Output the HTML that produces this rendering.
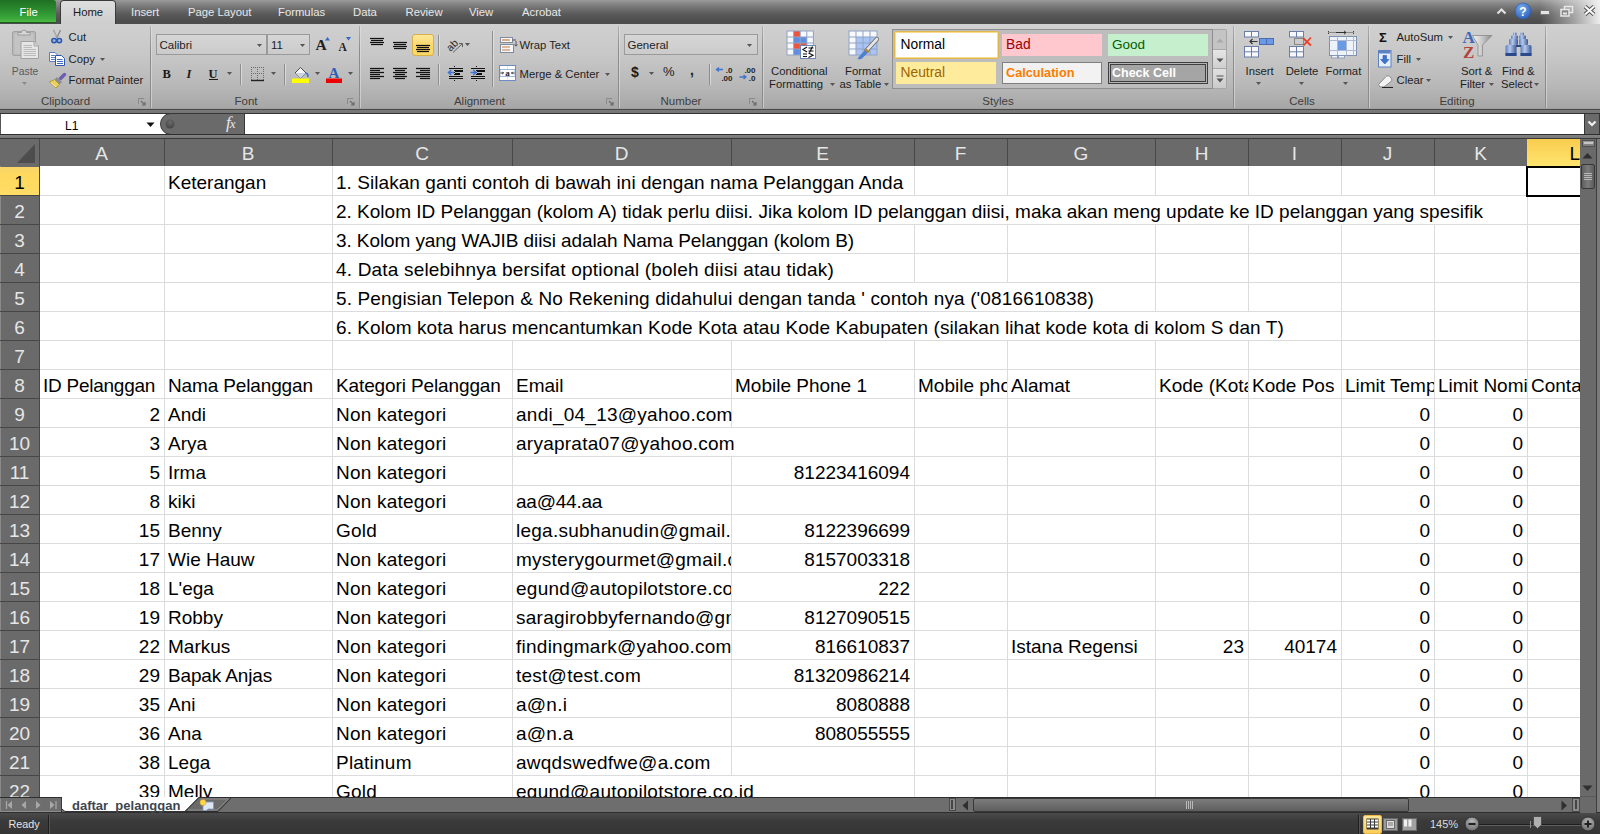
<!DOCTYPE html>
<html><head><meta charset="utf-8"><title>Excel</title>
<style>
html,body{margin:0;padding:0;}
body{width:1600px;height:834px;overflow:hidden;background:#c8c8c8;font-family:"Liberation Sans",sans-serif;}
#root{position:relative;width:1600px;height:834px;overflow:hidden;}
.abs{position:absolute;}
.gridbg{position:absolute;background:#fff;}
.hl{position:absolute;left:40px;width:1540px;height:1px;background:#dadcdd;}
.vl{position:absolute;width:1px;background:#dadcdd;}
.ct{position:absolute;height:29px;line-height:29px;font-size:19px;color:#000;white-space:nowrap;overflow:hidden;padding-top:2px;box-sizing:border-box;}
.ct.r{text-align:right;}
.corner{position:absolute;left:0;top:139px;width:39px;height:27px;background:#6a6a6a;}
.colhdr{position:absolute;left:40px;top:139px;width:1540px;height:27px;background:#6a6a6a;border-bottom:0;}
.ch{position:absolute;top:139px;height:27px;line-height:30px;font-size:19px;color:#e6e6e6;text-align:center;box-sizing:border-box;}
.ch.sel{background:linear-gradient(#f9cd4e,#ffe46f);color:#000;text-align:right;padding-right:0;}
.chsep{position:absolute;top:139px;width:1px;height:27px;background:#484848;}
.rowhdr{position:absolute;left:0;top:166px;width:39px;height:631px;background:#6a6a6a;}
.rh{position:absolute;left:0;width:39px;height:28px;line-height:29px;font-size:19px;color:#e6e6e6;text-align:center;padding-top:1px;box-sizing:border-box;}
.rh.sel{background:linear-gradient(#f7d46a,#ffd95e 30%,#ffdc66);color:#000;}
.rhsep{position:absolute;left:0;width:39px;height:1px;background:#464646;}
.selbox{position:absolute;left:1526px;top:166px;width:60px;height:31px;border:2px solid #000;border-top-width:2px;box-sizing:border-box;}
.t{position:absolute;white-space:nowrap;}
#tabstrip{position:absolute;left:0;top:0;width:1600px;height:24px;background:linear-gradient(#9a9a9a 0px,#7a7a7a 6px,#5a5a5a 14px,#4f4f4f 20px,#4d4d4d 24px);}
#tabglow{position:absolute;left:1480px;top:0;width:120px;height:24px;background:linear-gradient(90deg,rgba(240,240,240,0) 0%,rgba(240,240,240,0) 50%,rgba(240,240,240,0.55) 80%,rgba(245,245,245,0.95) 100%);}
#filebtn{position:absolute;left:0;top:0;width:56px;height:23px;border-radius:0 3px 0 0;background:linear-gradient(#1f6f22 0%,#2a8a2e 40%,#3aa83c 80%,#57c045 100%);box-shadow:inset 0 -1px 0 #1b5e1c;}
#hometab{position:absolute;left:61px;top:1px;width:54px;height:24px;border-radius:3px 3px 0 0;background:linear-gradient(#dedede,#cdcdcd);box-shadow:0 0 0 1px #3a3a3a;}
#ribbon{position:absolute;left:0;top:24px;width:1600px;height:85px;background:linear-gradient(#d0d0d0 0%,#c8c8c8 35%,#b9b9b9 70%,#a6a6a6 100%);}
#ribbonbot{position:absolute;left:0;top:108px;width:1600px;height:1px;background:#a0a0a0;}
.gsep{position:absolute;top:26px;width:1px;height:82px;background:linear-gradient(rgba(140,140,140,0.5),#8c8c8c 30%,#8a8a8a);box-shadow:1px 0 0 rgba(228,228,228,0.55);}
#fbband1{position:absolute;left:0;top:109px;width:1600px;height:5px;background:linear-gradient(#4a4a4a 0px,#4a4a4a 1px,#7a7a7a 1px,#747474 4px,#343434 4px);}
#namebox{position:absolute;left:0;top:114px;width:165px;height:20px;background:#fff;box-shadow:inset 1px 0 0 #555;}
#fxpill{position:absolute;left:160px;top:113px;width:85px;height:22px;box-sizing:border-box;background:#6a6a6a;border:1px solid #383838;border-radius:11px 0 0 11px;}
#fxinput{position:absolute;left:245px;top:114px;width:1340px;height:20px;background:#fff;}
#fbexp{position:absolute;left:1584px;top:113px;width:16px;height:22px;box-sizing:border-box;background:#6a6a6a;border:1px solid #363636;}
#fbband2{position:absolute;left:0;top:134px;width:1600px;height:5px;background:linear-gradient(#2e2e2e 0px,#2e2e2e 1px,#858585 1px,#767676 4px,#3a3a3a 4px);}
.combo{position:absolute;box-sizing:border-box;border:1px solid #9a9a9a;background:linear-gradient(#d6d6d6,#cbcbcb);}
.rowhdr{box-shadow:inset 1px 0 0 #8a8a8a;}

</style></head><body>
<div id="root">
<div id="tabstrip"></div>
<div id="tabglow"></div>
<div id="filebtn"></div>
<div class="t" style="left:19.5px;top:6.93px;font-size:11.3px;line-height:11.3px;color:#ffffff;font-weight:normal;">File</div>
<div id="hometab"></div>
<div class="t" style="left:73px;top:6.93px;font-size:11.3px;line-height:11.3px;color:#1a1a1a;font-weight:normal;">Home</div>
<div class="t" style="left:131px;top:6.93px;font-size:11.3px;line-height:11.3px;color:#e8e8e8;font-weight:normal;">Insert</div>
<div class="t" style="left:188px;top:6.93px;font-size:11.3px;line-height:11.3px;color:#e8e8e8;font-weight:normal;">Page Layout</div>
<div class="t" style="left:278px;top:6.93px;font-size:11.3px;line-height:11.3px;color:#e8e8e8;font-weight:normal;">Formulas</div>
<div class="t" style="left:353px;top:6.93px;font-size:11.3px;line-height:11.3px;color:#e8e8e8;font-weight:normal;">Data</div>
<div class="t" style="left:405.5px;top:6.93px;font-size:11.3px;line-height:11.3px;color:#e8e8e8;font-weight:normal;">Review</div>
<div class="t" style="left:469px;top:6.93px;font-size:11.3px;line-height:11.3px;color:#e8e8e8;font-weight:normal;">View</div>
<div class="t" style="left:522px;top:6.93px;font-size:11.3px;line-height:11.3px;color:#e8e8e8;font-weight:normal;">Acrobat</div>
<svg class="abs" style="left:1496px;top:7px" width="11" height="8" viewBox="0 0 11 8"><path d="M1.5,6.5 L5.5,2.5 L9.5,6.5" fill="none" stroke="#e0e0e0" stroke-width="2.2"/></svg>
<svg class="abs" style="left:1514px;top:2px" width="18" height="18" viewBox="0 0 18 18"><defs><radialGradient id="hg" cx="40%" cy="30%" r="70%"><stop offset="0" stop-color="#7aa7e8"/><stop offset="1" stop-color="#2f66c0"/></radialGradient></defs><circle cx="9" cy="9" r="8" fill="url(#hg)" stroke="#2a5aa8" stroke-width="0.6"/><text x="9" y="13.5" font-family="Liberation Sans" font-weight="bold" font-size="12" fill="#fff" text-anchor="middle">?</text></svg>
<div class="abs" style="left:1540px;top:10px;width:10px;height:5px;background:#e6e6e6;border:1px solid #7a7a7a;border-radius:1px;box-sizing:border-box"></div>
<svg class="abs" style="left:1560px;top:5px" width="14" height="12" viewBox="0 0 14 12"><rect x="4.5" y="1.5" width="8" height="6" fill="none" stroke="#e8e8e8" stroke-width="1.5"/><rect x="1" y="4.5" width="8" height="6.5" fill="#888" stroke="#e8e8e8" stroke-width="1.5"/><rect x="3" y="7.5" width="4" height="2" fill="#e8e8e8"/></svg>
<svg class="abs" style="left:1583px;top:5px" width="13" height="11" viewBox="0 0 13 11"><path d="M2,1.5 L11,9.5 M11,1.5 L2,9.5" stroke="#4a4a4a" stroke-width="4"/><path d="M2,1.5 L11,9.5 M11,1.5 L2,9.5" stroke="#f8f8f8" stroke-width="2.3"/></svg>
<div id="ribbon"></div>
<div id="ribbonbot"></div>
<div class="gsep" style="left:150px"></div>
<div class="gsep" style="left:359px"></div>
<div class="gsep" style="left:618px"></div>
<div class="gsep" style="left:762px"></div>
<div class="gsep" style="left:1233px"></div>
<div class="gsep" style="left:1368px"></div>
<div class="gsep" style="left:1545px"></div>
<div class="t" style="left:25.5px;width:80px;text-align:center;top:96.17px;font-size:11.5px;line-height:11.5px;color:#3e3e3e;font-weight:normal;">Clipboard</div>
<div class="t" style="left:216.0px;width:60px;text-align:center;top:96.17px;font-size:11.5px;line-height:11.5px;color:#3e3e3e;font-weight:normal;">Font</div>
<div class="t" style="left:439.5px;width:80px;text-align:center;top:96.17px;font-size:11.5px;line-height:11.5px;color:#3e3e3e;font-weight:normal;">Alignment</div>
<div class="t" style="left:646.0px;width:70px;text-align:center;top:96.17px;font-size:11.5px;line-height:11.5px;color:#3e3e3e;font-weight:normal;">Number</div>
<div class="t" style="left:968.0px;width:60px;text-align:center;top:96.17px;font-size:11.5px;line-height:11.5px;color:#3e3e3e;font-weight:normal;">Styles</div>
<div class="t" style="left:1272.0px;width:60px;text-align:center;top:96.17px;font-size:11.5px;line-height:11.5px;color:#3e3e3e;font-weight:normal;">Cells</div>
<div class="t" style="left:1422.0px;width:70px;text-align:center;top:96.17px;font-size:11.5px;line-height:11.5px;color:#3e3e3e;font-weight:normal;">Editing</div>
<svg class="abs" style="left:138px;top:98px" width="8" height="8" viewBox="0 0 8 8"><path d="M0.5,6 V0.5 H6" fill="none" stroke="#8a8a8a" stroke-width="1"/><path d="M3,3 L7,7 M7,4 V7 H4" fill="none" stroke="#6d6d6d" stroke-width="1.2"/></svg>
<svg class="abs" style="left:347px;top:98px" width="8" height="8" viewBox="0 0 8 8"><path d="M0.5,6 V0.5 H6" fill="none" stroke="#8a8a8a" stroke-width="1"/><path d="M3,3 L7,7 M7,4 V7 H4" fill="none" stroke="#6d6d6d" stroke-width="1.2"/></svg>
<svg class="abs" style="left:606px;top:98px" width="8" height="8" viewBox="0 0 8 8"><path d="M0.5,6 V0.5 H6" fill="none" stroke="#8a8a8a" stroke-width="1"/><path d="M3,3 L7,7 M7,4 V7 H4" fill="none" stroke="#6d6d6d" stroke-width="1.2"/></svg>
<svg class="abs" style="left:749px;top:98px" width="8" height="8" viewBox="0 0 8 8"><path d="M0.5,6 V0.5 H6" fill="none" stroke="#8a8a8a" stroke-width="1"/><path d="M3,3 L7,7 M7,4 V7 H4" fill="none" stroke="#6d6d6d" stroke-width="1.2"/></svg>
<svg class="abs" style="left:10px;top:28px" width="30" height="32" viewBox="0 0 30 32">
      <rect x="2.5" y="3.5" width="23" height="24" rx="1.5" fill="#b9b9b9" stroke="#a2a2a2"/>
      <rect x="4.5" y="5.5" width="19" height="20" fill="#c4c4c4"/>
      <path d="M8,7 V4.5 H11.5 A2.5,2.5 0 0 1 16.5,4.5 H20 V7 Z" fill="#d8d8d8" stroke="#9a9a9a"/>
      <path d="M11,13.5 H24 L28.5,18 V30.5 H11 Z" fill="#e6e6e6" stroke="#a0a0a0"/>
      <path d="M24,13.5 V18 H28.5" fill="#d0d0d0" stroke="#a8a8a8"/>
      <path d="M13.5,17.5 H22 M13.5,19.5 H22 M13.5,21.5 H26 M13.5,23.5 H26 M13.5,25.5 H26 M13.5,27.5 H26" stroke="#b4b4b4" stroke-width="0.9"/>
    </svg>
<div class="t" style="left:11.8px;top:66.60px;font-size:10.4px;line-height:10.4px;color:#5a5a62;font-weight:normal;">Paste</div>
<svg class="abs" style="left:22px;top:82px" width="6" height="4" viewBox="0 0 6 4"><polygon points="0,0 5,0 2.5,3" fill="#8a8a8a"/></svg>
<svg class="abs" style="left:50px;top:29px" width="14" height="16" viewBox="0 0 14 16">
      <path d="M3.5,1 L7.2,9 M10.5,1 L6.8,9" stroke="#8c8c8c" stroke-width="1.4"/>
      <path d="M3.8,1.5 L6.5,7.5" stroke="#dcdcdc" stroke-width="0.5"/>
      <ellipse cx="4.1" cy="11.6" rx="2.3" ry="2.1" fill="#9fb6e2" stroke="#2a58b0" stroke-width="1.5"/>
      <ellipse cx="9.3" cy="11.6" rx="2.3" ry="2.1" fill="#9fb6e2" stroke="#2a58b0" stroke-width="1.5"/>
    </svg>
<div class="t" style="left:68.5px;top:31.83px;font-size:11.3px;line-height:11.3px;color:#1e1e1e;font-weight:normal;">Cut</div>
<svg class="abs" style="left:48px;top:51px" width="18" height="16" viewBox="0 0 18 16">
      <path d="M1.5,1.5 H7 L9.5,4 V10.5 H1.5 Z" fill="#fbfcff" stroke="#5b7fc0"/>
      <path d="M3,4.5 H7 M3,6.5 H8 M3,8.5 H8" stroke="#5b7fc0" stroke-width="1"/>
      <path d="M7.5,4.5 H13.5 L16.5,7.5 V14.5 H7.5 Z" fill="#fbfcff" stroke="#2c57a6"/>
      <path d="M9,8.5 H14.5 M9,10.5 H15 M9,12.5 H15" stroke="#3e6bbd" stroke-width="1"/>
    </svg>
<div class="t" style="left:68.5px;top:53.63px;font-size:11.3px;line-height:11.3px;color:#1e1e1e;font-weight:normal;">Copy</div>
<svg class="abs" style="left:99.5px;top:58px" width="6" height="4" viewBox="0 0 6 4"><polygon points="0,0 5,0 2.5,3" fill="#555"/></svg>
<svg class="abs" style="left:48px;top:72px" width="19" height="17" viewBox="0 0 19 17">
      <path d="M12.5,6.5 L16.5,2.5" stroke="#6a5fb0" stroke-width="3.4" stroke-linecap="round"/>
      <path d="M9,5 L14,10 L11.5,12.5 L6.5,7.5 Z" fill="#8c8c9a"/>
      <path d="M1.5,10 L6.5,7.5 L11.5,12.5 L8,16 Z" fill="#e6cf5e" stroke="#a98f2a" stroke-width="0.8"/>
      <path d="M3,10.5 L8,15" stroke="#fff3a8" stroke-width="1"/>
    </svg>
<div class="t" style="left:68.5px;top:75.43px;font-size:11.3px;line-height:11.3px;color:#1e1e1e;font-weight:normal;">Format Painter</div>
<div class="combo" style="left:156px;top:34px;width:111px;height:21px"></div>
<div class="combo" style="left:267px;top:34px;width:43px;height:21px"></div>
<div class="t" style="left:159.5px;top:40.27px;font-size:11.5px;line-height:11.5px;color:#1e1e1e;font-weight:normal;">Calibri</div>
<svg class="abs" style="left:257px;top:44px" width="6" height="4" viewBox="0 0 6 4"><polygon points="0,0 5,0 2.5,3" fill="#555"/></svg>
<div class="t" style="left:271px;top:40.27px;font-size:11.5px;line-height:11.5px;color:#1e1e1e;font-weight:normal;">11</div>
<svg class="abs" style="left:300px;top:44px" width="6" height="4" viewBox="0 0 6 4"><polygon points="0,0 5,0 2.5,3" fill="#555"/></svg>
<div class="t" style="left:315.5px;top:37px;font-family:'Liberation Serif',serif;font-size:15.5px;line-height:16px;color:#222;font-weight:bold">A</div>
<svg class="abs" style="left:325px;top:37px" width="6" height="4" viewBox="0 0 6 4"><polygon points="0,3.5 5,3.5 2.5,0" fill="#3268c4"/></svg>
<div class="t" style="left:338.5px;top:41px;font-family:'Liberation Serif',serif;font-size:11.5px;line-height:12px;color:#222;font-weight:bold">A</div>
<svg class="abs" style="left:346px;top:37px" width="6" height="4" viewBox="0 0 6 4"><polygon points="0,0 5,0 2.5,3.5" fill="#3268c4"/></svg>
<div class="t" style="left:162.5px;top:66.5px;font-family:'Liberation Serif',serif;font-size:12.5px;line-height:14px;color:#1a1a1a;font-weight:bold">B</div>
<div class="t" style="left:186.5px;top:66.5px;font-family:'Liberation Serif',serif;font-size:12.5px;line-height:14px;color:#1a1a1a;font-style:italic;font-weight:bold">I</div>
<div class="t" style="left:208.5px;top:66.5px;font-family:'Liberation Serif',serif;font-size:12.5px;line-height:14px;color:#1a1a1a;font-weight:bold">U</div>
<div class="abs" style="left:209px;top:79px;width:9px;height:1.3px;background:#1a1a1a"></div>
<svg class="abs" style="left:227px;top:72px" width="6" height="4" viewBox="0 0 6 4"><polygon points="0,0 5,0 2.5,3" fill="#555"/></svg>
<div class="abs" style="left:240px;top:64px;width:1px;height:21px;background:#8e8e8e;box-shadow:1px 0 0 rgba(236,236,236,0.6)"></div>
<svg class="abs" style="left:250px;top:66px" width="16" height="16" viewBox="0 0 16 16"><path d="M1.5,1 V14 M7.5,1 V14 M13.5,1 V14 M1,1.5 H14 M1,7.5 H14" fill="none" stroke="#6a6a6a" stroke-width="1" stroke-dasharray="1,1"/><path d="M1,14.5 H14" stroke="#222" stroke-width="1.4"/></svg>
<svg class="abs" style="left:271px;top:72px" width="6" height="4" viewBox="0 0 6 4"><polygon points="0,0 5,0 2.5,3" fill="#555"/></svg>
<div class="abs" style="left:284px;top:64px;width:1px;height:21px;background:#8e8e8e;box-shadow:1px 0 0 rgba(236,236,236,0.6)"></div>
<svg class="abs" style="left:291px;top:65px" width="20" height="19" viewBox="0 0 20 19">
      <path d="M4,8 L9.5,2.5 L15,8 L9.5,13.5 Z" fill="#f4f4f4" stroke="#4a4a4a" stroke-width="1"/>
      <path d="M4,8 L15,8 L9.5,13.5 Z" fill="#c9d3e2"/>
      <path d="M15,8 C17,9 17.5,11 16.5,12" fill="none" stroke="#3d6fc6" stroke-width="1.6"/>
      <rect x="1" y="13.5" width="17" height="4.5" fill="#ffff00"/>
    </svg>
<svg class="abs" style="left:315px;top:72px" width="6" height="4" viewBox="0 0 6 4"><polygon points="0,0 5,0 2.5,3" fill="#555"/></svg>
<svg class="abs" style="left:325px;top:65px" width="20" height="19" viewBox="0 0 20 19">
      <text x="9" y="12.5" font-family="Liberation Serif" font-weight="bold" font-size="15" fill="#2e5fb6" text-anchor="middle">A</text>
      <rect x="1" y="13.5" width="16" height="4.5" fill="#ee0000"/>
    </svg>
<svg class="abs" style="left:348px;top:72px" width="6" height="4" viewBox="0 0 6 4"><polygon points="0,0 5,0 2.5,3" fill="#555"/></svg>
<div class="abs" style="left:412px;top:34px;width:22px;height:22px;box-sizing:border-box;border:1px solid #d8b04a;border-radius:3px;background:linear-gradient(#fde89a,#fcd664 60%,#fbd865)"></div>
<svg class="abs" style="left:0;top:0" width="500" height="100"><path d="M370,38.5 H384" stroke="#111" stroke-width="1.25"/><path d="M371,40.5 H383" stroke="#111" stroke-width="1.25"/><path d="M370,42.5 H384" stroke="#111" stroke-width="1.25"/><path d="M371,44.5 H383" stroke="#111" stroke-width="1.25"/><path d="M393,42.5 H407" stroke="#111" stroke-width="1.25"/><path d="M394,44.5 H406" stroke="#111" stroke-width="1.25"/><path d="M393,46.5 H407" stroke="#111" stroke-width="1.25"/><path d="M394,48.5 H406" stroke="#111" stroke-width="1.25"/><path d="M416,45.5 H430" stroke="#111" stroke-width="1.25"/><path d="M417,47.5 H429" stroke="#111" stroke-width="1.25"/><path d="M416,49.5 H430" stroke="#111" stroke-width="1.25"/><path d="M417,51.5 H429" stroke="#111" stroke-width="1.25"/><path d="M370,68.5 H384" stroke="#111" stroke-width="1.25"/><path d="M370,70.5 H380" stroke="#111" stroke-width="1.25"/><path d="M370,72.5 H384" stroke="#111" stroke-width="1.25"/><path d="M370,74.5 H380" stroke="#111" stroke-width="1.25"/><path d="M370,76.5 H384" stroke="#111" stroke-width="1.25"/><path d="M370,78.5 H380" stroke="#111" stroke-width="1.25"/><path d="M393,68.5 H407" stroke="#111" stroke-width="1.25"/><path d="M395,70.5 H405" stroke="#111" stroke-width="1.25"/><path d="M393,72.5 H407" stroke="#111" stroke-width="1.25"/><path d="M395,74.5 H405" stroke="#111" stroke-width="1.25"/><path d="M393,76.5 H407" stroke="#111" stroke-width="1.25"/><path d="M395,78.5 H405" stroke="#111" stroke-width="1.25"/><path d="M416,68.5 H430" stroke="#111" stroke-width="1.25"/><path d="M420,70.5 H430" stroke="#111" stroke-width="1.25"/><path d="M416,72.5 H430" stroke="#111" stroke-width="1.25"/><path d="M420,74.5 H430" stroke="#111" stroke-width="1.25"/><path d="M416,76.5 H430" stroke="#111" stroke-width="1.25"/><path d="M420,78.5 H430" stroke="#111" stroke-width="1.25"/><path d="M454.5,66 V81.5" stroke="#111" stroke-width="1" stroke-dasharray="1,1"/><path d="M449,68.5 H463 M449,76.5 H463 M449,78.5 H463" stroke="#111" stroke-width="1.2"/><path d="M455,71 H463 M455,74 H460" stroke="#111" stroke-width="2"/><path d="M454,72.5 H448.5 M451.2,70 L448.5,72.5 L451.2,75" fill="none" stroke="#3f74d0" stroke-width="1.5"/><path d="M476.5,66 V81.5" stroke="#111" stroke-width="1" stroke-dasharray="1,1"/><path d="M471,68.5 H485 M471,76.5 H485 M471,78.5 H485" stroke="#111" stroke-width="1.2"/><path d="M477,71 H485 M477,74 H482" stroke="#111" stroke-width="2"/><path d="M470.5,72.5 H476 M473.3,70 L476,72.5 L473.3,75" fill="none" stroke="#3f74d0" stroke-width="1.5"/></svg>
<div class="abs" style="left:438px;top:35px;width:1px;height:21px;background:#8e8e8e;box-shadow:1px 0 0 rgba(236,236,236,0.6)"></div>
<div class="abs" style="left:438px;top:64px;width:1px;height:21px;background:#8e8e8e;box-shadow:1px 0 0 rgba(236,236,236,0.6)"></div>
<svg class="abs" style="left:446px;top:37px" width="20" height="17" viewBox="0 0 20 17"><text x="0" y="0" transform="translate(4.5,15) rotate(-45)" font-family="Liberation Sans" font-size="10.5" fill="#2a2a2a">ab</text><path d="M7,15.5 L16,7 M13,6.5 H16.5 V10" fill="none" stroke="#555" stroke-width="0.9"/></svg>
<svg class="abs" style="left:465px;top:43px" width="6" height="4" viewBox="0 0 6 4"><polygon points="0,0 5,0 2.5,3" fill="#555"/></svg>
<div class="abs" style="left:492px;top:31px;width:1px;height:56px;background:#8e8e8e;box-shadow:1px 0 0 rgba(236,236,236,0.6)"></div>
<svg class="abs" style="left:499px;top:36px" width="19" height="18" viewBox="0 0 19 18">
      <rect x="1.5" y="1.5" width="12" height="5" fill="#f7f7f7" stroke="#7f8a9a"/>
      <path d="M3,4 H11" stroke="#c77a3e" stroke-width="1.2"/>
      <path d="M13.5,4 H17" stroke="#555" stroke-width="1"/>
      <rect x="1.5" y="8.5" width="13" height="8" fill="#f4f6fa" stroke="#7f8a9a"/>
      <path d="M3,11 H11 M3,14 H11" stroke="#c77a3e" stroke-width="1.2"/>
      <path d="M17,5 V10 M15.5,8.5 L17,10.2 L18.5,8.5" fill="none" stroke="#4a4a4a" stroke-width="0.9"/>
    </svg>
<div class="t" style="left:519.5px;top:40.43px;font-size:11.3px;line-height:11.3px;color:#1e1e1e;font-weight:normal;">Wrap Text</div>
<svg class="abs" style="left:499px;top:65px" width="18" height="17" viewBox="0 0 18 17">
      <rect x="0.5" y="0.5" width="16" height="15" fill="#dce6f6" stroke="#6c8cc4"/>
      <rect x="1" y="1" width="7" height="3" fill="#fff"/><rect x="9" y="1" width="7" height="3" fill="#fff"/>
      <rect x="1" y="12" width="7" height="3" fill="#fff"/><rect x="9" y="12" width="7" height="3" fill="#fff"/>
      <rect x="1" y="4.5" width="15" height="7" fill="#fff" stroke="#6c8cc4" stroke-width="0.6"/>
      <text x="8.5" y="10.8" font-family="Liberation Serif" font-weight="bold" font-size="9" fill="#222" text-anchor="middle">a</text>
      <path d="M1.5,8 H4.5 M3.3,6.8 L4.5,8 L3.3,9.2 M15.5,8 H12.5 M13.7,6.8 L12.5,8 L13.7,9.2" fill="none" stroke="#222" stroke-width="0.9"/>
    </svg>
<div class="t" style="left:519.5px;top:69.43px;font-size:11.3px;line-height:11.3px;color:#1e1e1e;font-weight:normal;">Merge &amp; Center</div>
<svg class="abs" style="left:605px;top:73px" width="6" height="4" viewBox="0 0 6 4"><polygon points="0,0 5,0 2.5,3" fill="#555"/></svg>
<div class="combo" style="left:624px;top:34px;width:134px;height:21px"></div>
<div class="t" style="left:627.5px;top:40.27px;font-size:11.5px;line-height:11.5px;color:#1e1e1e;font-weight:normal;">General</div>
<svg class="abs" style="left:747px;top:44px" width="6" height="4" viewBox="0 0 6 4"><polygon points="0,0 5,0 2.5,3" fill="#555"/></svg>
<div class="t" style="left:631px;top:64px;font-size:14px;line-height:16px;color:#1a1a1a;font-weight:bold">$</div>
<svg class="abs" style="left:649px;top:72px" width="6" height="4" viewBox="0 0 6 4"><polygon points="0,0 5,0 2.5,3" fill="#555"/></svg>
<div class="t" style="left:663px;top:64px;font-size:13px;line-height:16px;color:#1a1a1a">%</div>
<div class="t" style="left:690px;top:62px;font-size:14px;line-height:16px;color:#1a1a1a;font-weight:bold">,</div>
<div class="abs" style="left:709px;top:64px;width:1px;height:21px;background:#8e8e8e;box-shadow:1px 0 0 rgba(236,236,236,0.6)"></div>
<svg class="abs" style="left:715px;top:66px" width="18" height="15" viewBox="0 0 18 15">
      <text x="17.5" y="7" font-family="Liberation Sans" font-size="8" font-weight="bold" fill="#222" text-anchor="end">.0</text>
      <text x="17.5" y="14.5" font-family="Liberation Sans" font-size="8" font-weight="bold" fill="#222" text-anchor="end">.00</text>
      <path d="M8,3.5 H1.5 M4,1.5 L1.5,3.5 L4,5.5" fill="none" stroke="#3f74d0" stroke-width="1.4"/>
    </svg>
<svg class="abs" style="left:738px;top:66px" width="18" height="15" viewBox="0 0 18 15">
      <text x="17.5" y="7" font-family="Liberation Sans" font-size="8" font-weight="bold" fill="#222" text-anchor="end">.00</text>
      <text x="17.5" y="14.5" font-family="Liberation Sans" font-size="8" font-weight="bold" fill="#222" text-anchor="end">.0</text>
      <path d="M1.5,11 H8 M5.5,9 L8,11 L5.5,13" fill="none" stroke="#3f74d0" stroke-width="1.4"/>
    </svg>
<svg class="abs" style="left:786px;top:30px" width="31" height="30" viewBox="0 0 31 30"><rect x="0.5" y="0.5" width="27.4" height="25" fill="#8fa3c6"/><rect x="1.5" y="1.5" width="5.6" height="5" fill="#f8f9fc"/><rect x="8.1" y="1.5" width="5.6" height="5" fill="#f0533a"/><rect x="14.7" y="1.5" width="5.6" height="5" fill="#f8f9fc"/><rect x="21.299999999999997" y="1.5" width="5.6" height="5" fill="#f8f9fc"/><rect x="1.5" y="7.5" width="5.6" height="5" fill="#f8f9fc"/><rect x="8.1" y="7.5" width="5.6" height="5" fill="#5f8de0"/><rect x="14.7" y="7.5" width="5.6" height="5" fill="#5f8de0"/><rect x="21.299999999999997" y="7.5" width="5.6" height="5" fill="#f8f9fc"/><rect x="1.5" y="13.5" width="5.6" height="5" fill="#f8f9fc"/><rect x="8.1" y="13.5" width="5.6" height="5" fill="#f0533a"/><rect x="14.7" y="13.5" width="5.6" height="5" fill="#f0533a"/><rect x="21.299999999999997" y="13.5" width="5.6" height="5" fill="#f8f9fc"/><rect x="1.5" y="19.5" width="5.6" height="5" fill="#f8f9fc"/><rect x="8.1" y="19.5" width="5.6" height="5" fill="#5f8de0"/><rect x="14.7" y="19.5" width="5.6" height="5" fill="#f8f9fc"/><rect x="21.299999999999997" y="19.5" width="5.6" height="5" fill="#f8f9fc"/><rect x="14.5" y="15.5" width="15" height="13" fill="#fbfcff" stroke="#6f86b0"/><path d="M21,17 L17,19.5 L21,22 M22.5,18 H27.5 M22.5,21 H27.5 M26.5,16.5 L23.5,22.5 M17,24 H21 M17,26.5 H21 M22.5,23 L27,25.3 L22.5,27.5" fill="none" stroke="#111" stroke-width="1.2"/></svg>
<div class="t" style="left:771px;top:65.93px;font-size:11.3px;line-height:11.3px;color:#1e1e1e;font-weight:normal;">Conditional</div>
<div class="t" style="left:769px;top:78.93px;font-size:11.3px;line-height:11.3px;color:#1e1e1e;font-weight:normal;">Formatting</div>
<svg class="abs" style="left:830px;top:83px" width="6" height="4" viewBox="0 0 6 4"><polygon points="0,0 5,0 2.5,3" fill="#555"/></svg>
<svg class="abs" style="left:848px;top:30px" width="31" height="31" viewBox="0 0 31 31"><rect x="0.5" y="0.5" width="29" height="25" fill="#8fa3c6"/><rect x="1.5" y="1.5" width="6" height="5" fill="#f8f9fc"/><rect x="8.5" y="1.5" width="6" height="5" fill="#f8f9fc"/><rect x="15.5" y="1.5" width="6" height="5" fill="#f8f9fc"/><rect x="22.5" y="1.5" width="6" height="5" fill="#f8f9fc"/><rect x="1.5" y="7.5" width="6" height="5" fill="#f8f9fc"/><rect x="8.5" y="7.5" width="6" height="5" fill="#a9c4f2"/><rect x="15.5" y="7.5" width="6" height="5" fill="#a9c4f2"/><rect x="22.5" y="7.5" width="6" height="5" fill="#a9c4f2"/><rect x="1.5" y="13.5" width="6" height="5" fill="#f8f9fc"/><rect x="8.5" y="13.5" width="6" height="5" fill="#a9c4f2"/><rect x="15.5" y="13.5" width="6" height="5" fill="#a9c4f2"/><rect x="22.5" y="13.5" width="6" height="5" fill="#a9c4f2"/><rect x="1.5" y="19.5" width="6" height="5" fill="#f8f9fc"/><rect x="8.5" y="19.5" width="6" height="5" fill="#a9c4f2"/><rect x="15.5" y="19.5" width="6" height="5" fill="#a9c4f2"/><rect x="22.5" y="19.5" width="6" height="5" fill="#a9c4f2"/><path d="M29,9 L18.5,20.5" stroke="#6e6e6e" stroke-width="4.4" stroke-linecap="round"/><path d="M29,9 L18.5,20.5" stroke="#e6e6e6" stroke-width="2.6" stroke-linecap="round"/><path d="M18.5,19 L21,21.5 L14,28.5 C12,29.5 10.5,29.5 9.5,29 C11,26.5 13,24 18.5,19 Z" fill="#4f7fd0"/><path d="M17,20.5 L20,23.5 L21.5,21.5 L18.5,18.5 Z" fill="#b08a3a"/></svg>
<div class="t" style="left:845px;top:65.93px;font-size:11.3px;line-height:11.3px;color:#1e1e1e;font-weight:normal;">Format</div>
<div class="t" style="left:839.5px;top:78.93px;font-size:11.3px;line-height:11.3px;color:#1e1e1e;font-weight:normal;">as Table</div>
<svg class="abs" style="left:884px;top:83px" width="6" height="4" viewBox="0 0 6 4"><polygon points="0,0 5,0 2.5,3" fill="#555"/></svg>
<div class="abs" style="left:892px;top:29px;width:321px;height:60px;box-sizing:border-box;border:1px solid #8e8e8e;background:#bdbdbd"></div>
<div class="abs" style="left:894px;top:31px;width:105px;height:28px;box-sizing:border-box;border:1px solid #e0b84e;border-radius:2px;background:#fff;box-shadow:inset 0 0 0 1px #f8dc8c"></div>
<div class="t" style="left:900.5px;top:38.02px;font-size:13.8px;line-height:13.8px;color:#000;font-weight:normal;">Normal</div>
<div class="abs" style="left:1002px;top:34px;width:100px;height:22px;background:#ffc7ce"></div>
<div class="t" style="left:1006px;top:38.02px;font-size:13.8px;line-height:13.8px;color:#9c0006;font-weight:normal;">Bad</div>
<div class="abs" style="left:1108px;top:34px;width:100px;height:22px;background:#c6efce"></div>
<div class="t" style="left:1112px;top:38.27px;font-size:13.5px;line-height:13.5px;color:#006100;font-weight:normal;">Good</div>
<div class="abs" style="left:896px;top:62px;width:100px;height:22px;background:#ffeb9c"></div>
<div class="t" style="left:900.5px;top:66.02px;font-size:13.8px;line-height:13.8px;color:#9c6500;font-weight:normal;">Neutral</div>
<div class="abs" style="left:1002px;top:62px;width:100px;height:22px;box-sizing:border-box;border:1px solid #7f7f7f;background:#f2f2f2"></div>
<div class="t" style="left:1006px;top:66.95px;font-size:12.7px;line-height:12.7px;color:#fa7d00;font-weight:bold;">Calculation</div>
<div class="abs" style="left:1108px;top:62px;width:100px;height:22px;box-sizing:border-box;border:1px solid #3f3f3f;background:#a5a5a5;box-shadow:inset 0 0 0 1px #b4b4b4,inset 0 0 0 2px #3f3f3f"></div>
<div class="t" style="left:1112px;top:67.12px;font-size:12.5px;line-height:12.5px;color:#ffffff;font-weight:bold;">Check Cell</div>
<div class="abs" style="left:1213px;top:29px;width:14px;height:60px;box-sizing:border-box;border:1px solid #a6a6a6;border-left:0;border-radius:0 2px 2px 0;background:#c4c4c4"></div>
<div class="abs" style="left:1213px;top:49px;width:13px;height:20px;box-sizing:border-box;border-top:1px solid #a8a8a8;border-bottom:1px solid #a8a8a8;background:linear-gradient(#e6e6e6,#cfcfcf)"></div>
<div class="abs" style="left:1213px;top:69px;width:13px;height:19px;background:linear-gradient(#e0e0e0,#cbcbcb)"></div>
<svg class="abs" style="left:1216px;top:38px" width="8" height="5" viewBox="0 0 8 5"><polygon points="0.5,4.5 7.5,4.5 4,0.8" fill="#a8a8a8"/></svg>
<svg class="abs" style="left:1216px;top:58px" width="8" height="5" viewBox="0 0 8 5"><polygon points="0.5,0.5 7.5,0.5 4,4.2" fill="#555"/></svg>
<svg class="abs" style="left:1216px;top:75px" width="8" height="9" viewBox="0 0 8 9"><path d="M0.5,1 H7.5" stroke="#555" stroke-width="1"/><polygon points="0.5,3.5 7.5,3.5 4,7.5" fill="#555"/></svg>
<svg class="abs" style="left:1244px;top:31px" width="31" height="27" viewBox="0 0 31 27">
      <rect x="0.5" y="0.5" width="14" height="5.5" fill="#f6f8fc" stroke="#6b7fa6"/><path d="M7.5,0.5 V6" stroke="#6b7fa6"/>
      <rect x="0.5" y="15.5" width="14" height="10.5" fill="#f6f8fc" stroke="#6b7fa6"/><path d="M7.5,15.5 V26 M0.5,20.8 H14.5" stroke="#6b7fa6"/>
      <rect x="15.5" y="7.5" width="14" height="6" fill="#6a9ae6" stroke="#4a6eb0"/><path d="M22.5,7.5 V13.5" stroke="#4a6eb0"/>
      <path d="M13.5,10.5 H6 M8.5,8 L6,10.5 L8.5,13" fill="none" stroke="#333" stroke-width="1.2"/>
    </svg>
<div class="t" style="left:1245.5px;top:65.93px;font-size:11.3px;line-height:11.3px;color:#1e1e1e;font-weight:normal;">Insert</div>
<svg class="abs" style="left:1256px;top:82px" width="6" height="4" viewBox="0 0 6 4"><polygon points="0,0 5,0 2.5,3" fill="#555"/></svg>
<svg class="abs" style="left:1289px;top:31px" width="25" height="27" viewBox="0 0 25 27">
      <rect x="0.5" y="0.5" width="14" height="5.5" fill="#f6f8fc" stroke="#6b7fa6"/><path d="M7.5,0.5 V6" stroke="#6b7fa6"/>
      <rect x="0.5" y="15.5" width="14" height="10.5" fill="#f6f8fc" stroke="#6b7fa6"/><path d="M7.5,15.5 V26 M0.5,20.8 H14.5" stroke="#6b7fa6"/>
      <rect x="5.5" y="7.5" width="9" height="6" fill="none" stroke="#333" stroke-width="0.9" stroke-dasharray="1,1"/>
      <path d="M14,7 L22,14.5 M22,6.5 L14.5,14.5" stroke="#e8402a" stroke-width="1.8"/>
    </svg>
<div class="t" style="left:1285.7px;top:65.93px;font-size:11.3px;line-height:11.3px;color:#1e1e1e;font-weight:normal;">Delete</div>
<svg class="abs" style="left:1299px;top:82px" width="6" height="4" viewBox="0 0 6 4"><polygon points="0,0 5,0 2.5,3" fill="#555"/></svg>
<svg class="abs" style="left:1328px;top:30px" width="30" height="29" viewBox="0 0 30 29">
      <path d="M0.5,1 V4 M25.5,1 V4 M0.5,2.5 H25.5" stroke="#333" stroke-width="0.9" stroke-dasharray="1,1"/>
      <path d="M8,2.5 H18 M16,0.8 L18,2.5 L16,4.2" fill="none" stroke="#333" stroke-width="1"/>
      <rect x="1.5" y="6.5" width="27" height="19" fill="#eef2fa" stroke="#7f8fb0"/>
      <path d="M9.5,6.5 V25.5 M18.5,6.5 V25.5 M25.5,6.5 V25.5 M1.5,10.5 H28.5 M1.5,20.5 H28.5" stroke="#aeb9d0"/>
      <rect x="10" y="11" width="8" height="9" fill="#6a9ae6"/>
      <rect x="3.5" y="25.5" width="6" height="2.5" fill="#eef2fa" stroke="#7f8fb0" stroke-width="0.8"/>
      <rect x="10.5" y="25.5" width="6" height="2.5" fill="#eef2fa" stroke="#7f8fb0" stroke-width="0.8"/>
    </svg>
<div class="t" style="left:1325.5px;top:65.93px;font-size:11.3px;line-height:11.3px;color:#1e1e1e;font-weight:normal;">Format</div>
<svg class="abs" style="left:1343px;top:82px" width="6" height="4" viewBox="0 0 6 4"><polygon points="0,0 5,0 2.5,3" fill="#555"/></svg>
<div class="t" style="left:1379px;top:31px;font-size:13px;line-height:14px;color:#111;font-weight:bold">&#931;</div>
<div class="t" style="left:1396.5px;top:32.13px;font-size:11.3px;line-height:11.3px;color:#1e1e1e;font-weight:normal;">AutoSum</div>
<svg class="abs" style="left:1448px;top:36px" width="6" height="4" viewBox="0 0 6 4"><polygon points="0,0 5,0 2.5,3" fill="#555"/></svg>
<svg class="abs" style="left:1378px;top:50px" width="14" height="18" viewBox="0 0 14 18"><rect x="0.5" y="0.5" width="12.5" height="16.5" fill="#e6eefb" stroke="#5d82c2"/><rect x="1" y="1" width="11.5" height="2.5" fill="#5d82c2"/><path d="M5,5.5 H8.5 V9.5 H11 L6.8,14 L2.5,9.5 H5 Z" fill="#3d73d0" stroke="#2a5cb0" stroke-width="0.6"/></svg>
<div class="t" style="left:1396.5px;top:53.63px;font-size:11.3px;line-height:11.3px;color:#1e1e1e;font-weight:normal;">Fill</div>
<svg class="abs" style="left:1416px;top:58px" width="6" height="4" viewBox="0 0 6 4"><polygon points="0,0 5,0 2.5,3" fill="#555"/></svg>
<svg class="abs" style="left:1377px;top:74px" width="17" height="14" viewBox="0 0 17 14"><path d="M1.5,10.5 L9,2.5 C10,1.5 11.5,1.5 12.5,2.5 L14,4 C15,5 15,6.5 14,7.5 L7,13 L3,13 Z" fill="#f2f2f2" stroke="#8a8a8a"/><path d="M5,13.5 H16" stroke="#222" stroke-width="1.1"/></svg>
<div class="t" style="left:1396.5px;top:75.13px;font-size:11.3px;line-height:11.3px;color:#1e1e1e;font-weight:normal;">Clear</div>
<svg class="abs" style="left:1426px;top:79px" width="6" height="4" viewBox="0 0 6 4"><polygon points="0,0 5,0 2.5,3" fill="#555"/></svg>
<svg class="abs" style="left:1462px;top:29px" width="32" height="31" viewBox="0 0 32 31">
      <defs><linearGradient id="fun" x1="0" x2="1"><stop offset="0" stop-color="#f4f4f4"/><stop offset="0.5" stop-color="#c8c8c8"/><stop offset="1" stop-color="#8a8a8a"/></linearGradient></defs>
      <path d="M10.5,6.5 H30 L20.5,16 V27 H16 V16 Z" fill="url(#fun)" stroke="#8a8a8a" stroke-width="0.8"/>
      <text x="0.5" y="13.8" font-family="Liberation Serif" font-weight="bold" font-size="17" fill="#4169b8">A</text>
      <text x="1" y="29" font-family="Liberation Serif" font-weight="bold" font-size="17" fill="#b3443a">Z</text>
    </svg>
<div class="t" style="left:1461px;top:65.93px;font-size:11.3px;line-height:11.3px;color:#1e1e1e;font-weight:normal;">Sort &amp;</div>
<div class="t" style="left:1460px;top:78.93px;font-size:11.3px;line-height:11.3px;color:#1e1e1e;font-weight:normal;">Filter</div>
<svg class="abs" style="left:1489px;top:83px" width="6" height="4" viewBox="0 0 6 4"><polygon points="0,0 5,0 2.5,3" fill="#555"/></svg>
<svg class="abs" style="left:1505px;top:32px" width="28" height="25" viewBox="0 0 28 25">
      <defs><linearGradient id="bino" x1="0" x2="1"><stop offset="0" stop-color="#5d7fc0"/><stop offset="0.4" stop-color="#b6c8ea"/><stop offset="1" stop-color="#3b5a9a"/></linearGradient></defs>
      <rect x="8" y="0.5" width="3.5" height="3" rx="1" fill="url(#bino)"/><rect x="15.5" y="0.5" width="3.5" height="3" rx="1" fill="url(#bino)"/>
      <rect x="6" y="3.5" width="7" height="3.5" rx="1" fill="url(#bino)"/><rect x="14" y="3.5" width="7" height="3.5" rx="1" fill="url(#bino)"/>
      <rect x="4" y="7" width="9" height="6" rx="1" fill="url(#bino)"/><rect x="14" y="7" width="9" height="6" rx="1" fill="url(#bino)"/>
      <rect x="0.5" y="13" width="11" height="11" rx="1.5" fill="url(#bino)"/><rect x="15.5" y="13" width="11" height="11" rx="1.5" fill="url(#bino)"/>
      <rect x="11" y="13" width="5" height="2" fill="#2f4a80"/>
      <rect x="0.5" y="21" width="11" height="3" fill="#2c4a8a"/><rect x="15.5" y="21" width="11" height="3" fill="#2c4a8a"/>
    </svg>
<div class="t" style="left:1502px;top:65.93px;font-size:11.3px;line-height:11.3px;color:#1e1e1e;font-weight:normal;">Find &amp;</div>
<div class="t" style="left:1501px;top:78.93px;font-size:11.3px;line-height:11.3px;color:#1e1e1e;font-weight:normal;">Select</div>
<svg class="abs" style="left:1534px;top:83px" width="6" height="4" viewBox="0 0 6 4"><polygon points="0,0 5,0 2.5,3" fill="#555"/></svg>
<div id="fbband1"></div>
<div id="namebox"></div>
<div class="t" style="left:65px;top:119.54px;font-size:12px;line-height:12px;color:#000;font-weight:normal;">L1</div>
<svg class="abs" style="left:146px;top:122px" width="9" height="6" viewBox="0 0 9 6"><polygon points="0.5,0.5 8.5,0.5 4.5,5" fill="#111"/></svg>
<div id="fxpill"></div>
<svg class="abs" style="left:165px;top:119px" width="10" height="10" viewBox="0 0 10 10"><defs><radialGradient id="dg" cx="50%" cy="30%" r="60%"><stop offset="0" stop-color="#6a6a6a"/><stop offset="1" stop-color="#4a4a4a"/></radialGradient></defs><circle cx="5" cy="5" r="4.5" fill="url(#dg)"/></svg>
<div class="t" style="left:226px;top:114px;font-family:'Liberation Serif',serif;font-style:italic;font-size:17px;line-height:18px;color:#e8e8e8;letter-spacing:-1px">f<span style="font-size:13px">x</span></div>
<div id="fxinput"></div>
<div id="fbexp"></div>
<svg class="abs" style="left:1586px;top:119px" width="12" height="9" viewBox="0 0 12 9"><path d="M2.5,2.5 L6,6 L9.5,2.5" fill="none" stroke="#f0f0f0" stroke-width="2.2"/></svg>
<div id="fbband2"></div>
<div class="corner"></div>
<svg class="abs" style="left:0;top:139px" width="40" height="28"><polygon points="35,5 35,24 17,24" fill="#4d4d4d"/></svg>
<div class="abs" style="left:39px;top:139px;width:1px;height:658px;background:#484848"></div>
<div class="colhdr"></div>
<div class="ch" style="left:39px;width:125px">A</div>
<div class="chsep" style="left:164px"></div>
<div class="ch" style="left:164px;width:168px">B</div>
<div class="chsep" style="left:332px"></div>
<div class="ch" style="left:332px;width:180px">C</div>
<div class="chsep" style="left:512px"></div>
<div class="ch" style="left:512px;width:219px">D</div>
<div class="chsep" style="left:731px"></div>
<div class="ch" style="left:731px;width:183px">E</div>
<div class="chsep" style="left:914px"></div>
<div class="ch" style="left:914px;width:93px">F</div>
<div class="chsep" style="left:1007px"></div>
<div class="ch" style="left:1007px;width:148px">G</div>
<div class="chsep" style="left:1155px"></div>
<div class="ch" style="left:1155px;width:93px">H</div>
<div class="chsep" style="left:1248px"></div>
<div class="ch" style="left:1248px;width:93px">I</div>
<div class="chsep" style="left:1341px"></div>
<div class="ch" style="left:1341px;width:93px">J</div>
<div class="chsep" style="left:1434px"></div>
<div class="ch" style="left:1434px;width:93px">K</div>
<div class="chsep" style="left:1527px"></div>
<div class="ch sel" style="left:1527px;width:53px">L</div>
<div class="chsep" style="left:9999px"></div>
<div class="abs" style="left:0;top:166px;width:1580px;height:1px;background:#3c3c3c"></div>
<div class="rowhdr"></div>
<div class="rh sel" style="top:167px">1</div>
<div class="rhsep" style="top:195px"></div>
<div class="rh" style="top:196px">2</div>
<div class="rhsep" style="top:224px"></div>
<div class="rh" style="top:225px">3</div>
<div class="rhsep" style="top:253px"></div>
<div class="rh" style="top:254px">4</div>
<div class="rhsep" style="top:282px"></div>
<div class="rh" style="top:283px">5</div>
<div class="rhsep" style="top:311px"></div>
<div class="rh" style="top:312px">6</div>
<div class="rhsep" style="top:340px"></div>
<div class="rh" style="top:341px">7</div>
<div class="rhsep" style="top:369px"></div>
<div class="rh" style="top:370px">8</div>
<div class="rhsep" style="top:398px"></div>
<div class="rh" style="top:399px">9</div>
<div class="rhsep" style="top:427px"></div>
<div class="rh" style="top:428px">10</div>
<div class="rhsep" style="top:456px"></div>
<div class="rh" style="top:457px">11</div>
<div class="rhsep" style="top:485px"></div>
<div class="rh" style="top:486px">12</div>
<div class="rhsep" style="top:514px"></div>
<div class="rh" style="top:515px">13</div>
<div class="rhsep" style="top:543px"></div>
<div class="rh" style="top:544px">14</div>
<div class="rhsep" style="top:572px"></div>
<div class="rh" style="top:573px">15</div>
<div class="rhsep" style="top:601px"></div>
<div class="rh" style="top:602px">16</div>
<div class="rhsep" style="top:630px"></div>
<div class="rh" style="top:631px">17</div>
<div class="rhsep" style="top:659px"></div>
<div class="rh" style="top:660px">18</div>
<div class="rhsep" style="top:688px"></div>
<div class="rh" style="top:689px">19</div>
<div class="rhsep" style="top:717px"></div>
<div class="rh" style="top:718px">20</div>
<div class="rhsep" style="top:746px"></div>
<div class="rh" style="top:747px">21</div>
<div class="rhsep" style="top:775px"></div>
<div class="rh" style="top:776px">22</div>
<div class="rhsep" style="top:804px"></div>
<div class="gridbg" style="left:40px;top:166px;width:1540px;height:631px"></div>
<div class="hl" style="top:195px"></div>
<div class="hl" style="top:224px"></div>
<div class="hl" style="top:253px"></div>
<div class="hl" style="top:282px"></div>
<div class="hl" style="top:311px"></div>
<div class="hl" style="top:340px"></div>
<div class="hl" style="top:369px"></div>
<div class="hl" style="top:398px"></div>
<div class="hl" style="top:427px"></div>
<div class="hl" style="top:456px"></div>
<div class="hl" style="top:485px"></div>
<div class="hl" style="top:514px"></div>
<div class="hl" style="top:543px"></div>
<div class="hl" style="top:572px"></div>
<div class="hl" style="top:601px"></div>
<div class="hl" style="top:630px"></div>
<div class="hl" style="top:659px"></div>
<div class="hl" style="top:688px"></div>
<div class="hl" style="top:717px"></div>
<div class="hl" style="top:746px"></div>
<div class="hl" style="top:775px"></div>
<div class="vl" style="left:164px;top:167px;height:28px"></div>
<div class="vl" style="left:332px;top:167px;height:28px"></div>
<div class="vl" style="left:914px;top:167px;height:28px"></div>
<div class="vl" style="left:1007px;top:167px;height:28px"></div>
<div class="vl" style="left:1155px;top:167px;height:28px"></div>
<div class="vl" style="left:1248px;top:167px;height:28px"></div>
<div class="vl" style="left:1341px;top:167px;height:28px"></div>
<div class="vl" style="left:1434px;top:167px;height:28px"></div>
<div class="vl" style="left:1527px;top:167px;height:28px"></div>
<div class="vl" style="left:164px;top:196px;height:28px"></div>
<div class="vl" style="left:332px;top:196px;height:28px"></div>
<div class="vl" style="left:1527px;top:196px;height:28px"></div>
<div class="vl" style="left:164px;top:225px;height:28px"></div>
<div class="vl" style="left:332px;top:225px;height:28px"></div>
<div class="vl" style="left:914px;top:225px;height:28px"></div>
<div class="vl" style="left:1007px;top:225px;height:28px"></div>
<div class="vl" style="left:1155px;top:225px;height:28px"></div>
<div class="vl" style="left:1248px;top:225px;height:28px"></div>
<div class="vl" style="left:1341px;top:225px;height:28px"></div>
<div class="vl" style="left:1434px;top:225px;height:28px"></div>
<div class="vl" style="left:1527px;top:225px;height:28px"></div>
<div class="vl" style="left:164px;top:254px;height:28px"></div>
<div class="vl" style="left:332px;top:254px;height:28px"></div>
<div class="vl" style="left:914px;top:254px;height:28px"></div>
<div class="vl" style="left:1007px;top:254px;height:28px"></div>
<div class="vl" style="left:1155px;top:254px;height:28px"></div>
<div class="vl" style="left:1248px;top:254px;height:28px"></div>
<div class="vl" style="left:1341px;top:254px;height:28px"></div>
<div class="vl" style="left:1434px;top:254px;height:28px"></div>
<div class="vl" style="left:1527px;top:254px;height:28px"></div>
<div class="vl" style="left:164px;top:283px;height:28px"></div>
<div class="vl" style="left:332px;top:283px;height:28px"></div>
<div class="vl" style="left:1155px;top:283px;height:28px"></div>
<div class="vl" style="left:1248px;top:283px;height:28px"></div>
<div class="vl" style="left:1341px;top:283px;height:28px"></div>
<div class="vl" style="left:1434px;top:283px;height:28px"></div>
<div class="vl" style="left:1527px;top:283px;height:28px"></div>
<div class="vl" style="left:164px;top:312px;height:28px"></div>
<div class="vl" style="left:332px;top:312px;height:28px"></div>
<div class="vl" style="left:1341px;top:312px;height:28px"></div>
<div class="vl" style="left:1434px;top:312px;height:28px"></div>
<div class="vl" style="left:1527px;top:312px;height:28px"></div>
<div class="vl" style="left:164px;top:341px;height:28px"></div>
<div class="vl" style="left:332px;top:341px;height:28px"></div>
<div class="vl" style="left:512px;top:341px;height:28px"></div>
<div class="vl" style="left:731px;top:341px;height:28px"></div>
<div class="vl" style="left:914px;top:341px;height:28px"></div>
<div class="vl" style="left:1007px;top:341px;height:28px"></div>
<div class="vl" style="left:1155px;top:341px;height:28px"></div>
<div class="vl" style="left:1248px;top:341px;height:28px"></div>
<div class="vl" style="left:1341px;top:341px;height:28px"></div>
<div class="vl" style="left:1434px;top:341px;height:28px"></div>
<div class="vl" style="left:1527px;top:341px;height:28px"></div>
<div class="vl" style="left:164px;top:370px;height:28px"></div>
<div class="vl" style="left:332px;top:370px;height:28px"></div>
<div class="vl" style="left:512px;top:370px;height:28px"></div>
<div class="vl" style="left:731px;top:370px;height:28px"></div>
<div class="vl" style="left:914px;top:370px;height:28px"></div>
<div class="vl" style="left:1007px;top:370px;height:28px"></div>
<div class="vl" style="left:1155px;top:370px;height:28px"></div>
<div class="vl" style="left:1248px;top:370px;height:28px"></div>
<div class="vl" style="left:1341px;top:370px;height:28px"></div>
<div class="vl" style="left:1434px;top:370px;height:28px"></div>
<div class="vl" style="left:1527px;top:370px;height:28px"></div>
<div class="vl" style="left:164px;top:399px;height:28px"></div>
<div class="vl" style="left:332px;top:399px;height:28px"></div>
<div class="vl" style="left:512px;top:399px;height:28px"></div>
<div class="vl" style="left:731px;top:399px;height:28px"></div>
<div class="vl" style="left:914px;top:399px;height:28px"></div>
<div class="vl" style="left:1007px;top:399px;height:28px"></div>
<div class="vl" style="left:1155px;top:399px;height:28px"></div>
<div class="vl" style="left:1248px;top:399px;height:28px"></div>
<div class="vl" style="left:1341px;top:399px;height:28px"></div>
<div class="vl" style="left:1434px;top:399px;height:28px"></div>
<div class="vl" style="left:1527px;top:399px;height:28px"></div>
<div class="vl" style="left:164px;top:428px;height:28px"></div>
<div class="vl" style="left:332px;top:428px;height:28px"></div>
<div class="vl" style="left:512px;top:428px;height:28px"></div>
<div class="vl" style="left:914px;top:428px;height:28px"></div>
<div class="vl" style="left:1007px;top:428px;height:28px"></div>
<div class="vl" style="left:1155px;top:428px;height:28px"></div>
<div class="vl" style="left:1248px;top:428px;height:28px"></div>
<div class="vl" style="left:1341px;top:428px;height:28px"></div>
<div class="vl" style="left:1434px;top:428px;height:28px"></div>
<div class="vl" style="left:1527px;top:428px;height:28px"></div>
<div class="vl" style="left:164px;top:457px;height:28px"></div>
<div class="vl" style="left:332px;top:457px;height:28px"></div>
<div class="vl" style="left:512px;top:457px;height:28px"></div>
<div class="vl" style="left:731px;top:457px;height:28px"></div>
<div class="vl" style="left:914px;top:457px;height:28px"></div>
<div class="vl" style="left:1007px;top:457px;height:28px"></div>
<div class="vl" style="left:1155px;top:457px;height:28px"></div>
<div class="vl" style="left:1248px;top:457px;height:28px"></div>
<div class="vl" style="left:1341px;top:457px;height:28px"></div>
<div class="vl" style="left:1434px;top:457px;height:28px"></div>
<div class="vl" style="left:1527px;top:457px;height:28px"></div>
<div class="vl" style="left:164px;top:486px;height:28px"></div>
<div class="vl" style="left:332px;top:486px;height:28px"></div>
<div class="vl" style="left:512px;top:486px;height:28px"></div>
<div class="vl" style="left:731px;top:486px;height:28px"></div>
<div class="vl" style="left:914px;top:486px;height:28px"></div>
<div class="vl" style="left:1007px;top:486px;height:28px"></div>
<div class="vl" style="left:1155px;top:486px;height:28px"></div>
<div class="vl" style="left:1248px;top:486px;height:28px"></div>
<div class="vl" style="left:1341px;top:486px;height:28px"></div>
<div class="vl" style="left:1434px;top:486px;height:28px"></div>
<div class="vl" style="left:1527px;top:486px;height:28px"></div>
<div class="vl" style="left:164px;top:515px;height:28px"></div>
<div class="vl" style="left:332px;top:515px;height:28px"></div>
<div class="vl" style="left:512px;top:515px;height:28px"></div>
<div class="vl" style="left:731px;top:515px;height:28px"></div>
<div class="vl" style="left:914px;top:515px;height:28px"></div>
<div class="vl" style="left:1007px;top:515px;height:28px"></div>
<div class="vl" style="left:1155px;top:515px;height:28px"></div>
<div class="vl" style="left:1248px;top:515px;height:28px"></div>
<div class="vl" style="left:1341px;top:515px;height:28px"></div>
<div class="vl" style="left:1434px;top:515px;height:28px"></div>
<div class="vl" style="left:1527px;top:515px;height:28px"></div>
<div class="vl" style="left:164px;top:544px;height:28px"></div>
<div class="vl" style="left:332px;top:544px;height:28px"></div>
<div class="vl" style="left:512px;top:544px;height:28px"></div>
<div class="vl" style="left:731px;top:544px;height:28px"></div>
<div class="vl" style="left:914px;top:544px;height:28px"></div>
<div class="vl" style="left:1007px;top:544px;height:28px"></div>
<div class="vl" style="left:1155px;top:544px;height:28px"></div>
<div class="vl" style="left:1248px;top:544px;height:28px"></div>
<div class="vl" style="left:1341px;top:544px;height:28px"></div>
<div class="vl" style="left:1434px;top:544px;height:28px"></div>
<div class="vl" style="left:1527px;top:544px;height:28px"></div>
<div class="vl" style="left:164px;top:573px;height:28px"></div>
<div class="vl" style="left:332px;top:573px;height:28px"></div>
<div class="vl" style="left:512px;top:573px;height:28px"></div>
<div class="vl" style="left:731px;top:573px;height:28px"></div>
<div class="vl" style="left:914px;top:573px;height:28px"></div>
<div class="vl" style="left:1007px;top:573px;height:28px"></div>
<div class="vl" style="left:1155px;top:573px;height:28px"></div>
<div class="vl" style="left:1248px;top:573px;height:28px"></div>
<div class="vl" style="left:1341px;top:573px;height:28px"></div>
<div class="vl" style="left:1434px;top:573px;height:28px"></div>
<div class="vl" style="left:1527px;top:573px;height:28px"></div>
<div class="vl" style="left:164px;top:602px;height:28px"></div>
<div class="vl" style="left:332px;top:602px;height:28px"></div>
<div class="vl" style="left:512px;top:602px;height:28px"></div>
<div class="vl" style="left:731px;top:602px;height:28px"></div>
<div class="vl" style="left:914px;top:602px;height:28px"></div>
<div class="vl" style="left:1007px;top:602px;height:28px"></div>
<div class="vl" style="left:1155px;top:602px;height:28px"></div>
<div class="vl" style="left:1248px;top:602px;height:28px"></div>
<div class="vl" style="left:1341px;top:602px;height:28px"></div>
<div class="vl" style="left:1434px;top:602px;height:28px"></div>
<div class="vl" style="left:1527px;top:602px;height:28px"></div>
<div class="vl" style="left:164px;top:631px;height:28px"></div>
<div class="vl" style="left:332px;top:631px;height:28px"></div>
<div class="vl" style="left:512px;top:631px;height:28px"></div>
<div class="vl" style="left:731px;top:631px;height:28px"></div>
<div class="vl" style="left:914px;top:631px;height:28px"></div>
<div class="vl" style="left:1007px;top:631px;height:28px"></div>
<div class="vl" style="left:1155px;top:631px;height:28px"></div>
<div class="vl" style="left:1248px;top:631px;height:28px"></div>
<div class="vl" style="left:1341px;top:631px;height:28px"></div>
<div class="vl" style="left:1434px;top:631px;height:28px"></div>
<div class="vl" style="left:1527px;top:631px;height:28px"></div>
<div class="vl" style="left:164px;top:660px;height:28px"></div>
<div class="vl" style="left:332px;top:660px;height:28px"></div>
<div class="vl" style="left:512px;top:660px;height:28px"></div>
<div class="vl" style="left:731px;top:660px;height:28px"></div>
<div class="vl" style="left:914px;top:660px;height:28px"></div>
<div class="vl" style="left:1007px;top:660px;height:28px"></div>
<div class="vl" style="left:1155px;top:660px;height:28px"></div>
<div class="vl" style="left:1248px;top:660px;height:28px"></div>
<div class="vl" style="left:1341px;top:660px;height:28px"></div>
<div class="vl" style="left:1434px;top:660px;height:28px"></div>
<div class="vl" style="left:1527px;top:660px;height:28px"></div>
<div class="vl" style="left:164px;top:689px;height:28px"></div>
<div class="vl" style="left:332px;top:689px;height:28px"></div>
<div class="vl" style="left:512px;top:689px;height:28px"></div>
<div class="vl" style="left:731px;top:689px;height:28px"></div>
<div class="vl" style="left:914px;top:689px;height:28px"></div>
<div class="vl" style="left:1007px;top:689px;height:28px"></div>
<div class="vl" style="left:1155px;top:689px;height:28px"></div>
<div class="vl" style="left:1248px;top:689px;height:28px"></div>
<div class="vl" style="left:1341px;top:689px;height:28px"></div>
<div class="vl" style="left:1434px;top:689px;height:28px"></div>
<div class="vl" style="left:1527px;top:689px;height:28px"></div>
<div class="vl" style="left:164px;top:718px;height:28px"></div>
<div class="vl" style="left:332px;top:718px;height:28px"></div>
<div class="vl" style="left:512px;top:718px;height:28px"></div>
<div class="vl" style="left:731px;top:718px;height:28px"></div>
<div class="vl" style="left:914px;top:718px;height:28px"></div>
<div class="vl" style="left:1007px;top:718px;height:28px"></div>
<div class="vl" style="left:1155px;top:718px;height:28px"></div>
<div class="vl" style="left:1248px;top:718px;height:28px"></div>
<div class="vl" style="left:1341px;top:718px;height:28px"></div>
<div class="vl" style="left:1434px;top:718px;height:28px"></div>
<div class="vl" style="left:1527px;top:718px;height:28px"></div>
<div class="vl" style="left:164px;top:747px;height:28px"></div>
<div class="vl" style="left:332px;top:747px;height:28px"></div>
<div class="vl" style="left:512px;top:747px;height:28px"></div>
<div class="vl" style="left:731px;top:747px;height:28px"></div>
<div class="vl" style="left:914px;top:747px;height:28px"></div>
<div class="vl" style="left:1007px;top:747px;height:28px"></div>
<div class="vl" style="left:1155px;top:747px;height:28px"></div>
<div class="vl" style="left:1248px;top:747px;height:28px"></div>
<div class="vl" style="left:1341px;top:747px;height:28px"></div>
<div class="vl" style="left:1434px;top:747px;height:28px"></div>
<div class="vl" style="left:1527px;top:747px;height:28px"></div>
<div class="vl" style="left:164px;top:776px;height:21px"></div>
<div class="vl" style="left:332px;top:776px;height:21px"></div>
<div class="vl" style="left:512px;top:776px;height:21px"></div>
<div class="vl" style="left:914px;top:776px;height:21px"></div>
<div class="vl" style="left:1007px;top:776px;height:21px"></div>
<div class="vl" style="left:1155px;top:776px;height:21px"></div>
<div class="vl" style="left:1248px;top:776px;height:21px"></div>
<div class="vl" style="left:1341px;top:776px;height:21px"></div>
<div class="vl" style="left:1434px;top:776px;height:21px"></div>
<div class="vl" style="left:1527px;top:776px;height:21px"></div>
<div class="ct" style="left:168px;top:166px;width:164px">Keterangan</div>
<div class="ct" style="left:336px;top:166px;width:1244px;letter-spacing:0.05px">1. Silakan ganti contoh di bawah ini dengan nama Pelanggan Anda</div>
<div class="ct" style="left:336px;top:195px;width:1244px">2. Kolom ID Pelanggan (kolom A) tidak perlu diisi. Jika kolom ID pelanggan diisi, maka akan meng update ke ID pelanggan yang spesifik</div>
<div class="ct" style="left:336px;top:224px;width:1244px;letter-spacing:-0.09px">3. Kolom yang WAJIB diisi adalah Nama Pelanggan (kolom B)</div>
<div class="ct" style="left:336px;top:253px;width:1244px;letter-spacing:0.18px">4. Data selebihnya bersifat optional (boleh diisi atau tidak)</div>
<div class="ct" style="left:336px;top:282px;width:1244px;letter-spacing:0.137px">5. Pengisian Telepon &amp; No Rekening didahului dengan tanda ' contoh nya ('0816610838)</div>
<div class="ct" style="left:336px;top:311px;width:1244px;letter-spacing:0.078px">6. Kolom kota harus mencantumkan Kode Kota atau Kode Kabupaten (silakan lihat kode kota di kolom S dan T)</div>
<div class="ct" style="left:43px;top:369px;width:121px;letter-spacing:-0.25px">ID Pelanggan</div>
<div class="ct" style="left:168px;top:369px;width:164px;letter-spacing:-0.14px">Nama Pelanggan</div>
<div class="ct" style="left:336px;top:369px;width:176px;letter-spacing:-0.12px">Kategori Pelanggan</div>
<div class="ct" style="left:516px;top:369px;width:215px">Email</div>
<div class="ct" style="left:735px;top:369px;width:179px">Mobile Phone 1</div>
<div class="ct" style="left:918px;top:369px;width:89px">Mobile phone 2</div>
<div class="ct" style="left:1011px;top:369px;width:144px">Alamat</div>
<div class="ct" style="left:1159px;top:369px;width:89px">Kode (Kota)</div>
<div class="ct" style="left:1252px;top:369px;width:89px">Kode Pos</div>
<div class="ct" style="left:1345px;top:369px;width:89px">Limit Tempo</div>
<div class="ct" style="left:1438px;top:369px;width:89px">Limit Nominal</div>
<div class="ct" style="left:1531px;top:369px;width:49px">Contact</div>
<div class="ct r" style="left:40px;top:398px;width:120px">2</div>
<div class="ct" style="left:168px;top:398px;width:164px">Andi</div>
<div class="ct" style="left:336px;top:398px;width:176px;letter-spacing:0.22px">Non kategori</div>
<div class="ct" style="left:516px;top:398px;width:825px;letter-spacing:0.25px">andi_04_13@yahoo.com</div>
<div class="ct r" style="left:1342px;top:398px;width:88px">0</div>
<div class="ct r" style="left:1435px;top:398px;width:88px">0</div>
<div class="ct r" style="left:40px;top:427px;width:120px">3</div>
<div class="ct" style="left:168px;top:427px;width:164px">Arya</div>
<div class="ct" style="left:336px;top:427px;width:176px;letter-spacing:0.22px">Non kategori</div>
<div class="ct" style="left:516px;top:427px;width:825px;letter-spacing:0.25px">aryaprata07@yahoo.com</div>
<div class="ct r" style="left:1342px;top:427px;width:88px">0</div>
<div class="ct r" style="left:1435px;top:427px;width:88px">0</div>
<div class="ct r" style="left:40px;top:456px;width:120px">5</div>
<div class="ct" style="left:168px;top:456px;width:164px">Irma</div>
<div class="ct" style="left:336px;top:456px;width:395px;letter-spacing:0.22px">Non kategori</div>
<div class="ct r" style="left:732px;top:456px;width:178px">81223416094</div>
<div class="ct r" style="left:1342px;top:456px;width:88px">0</div>
<div class="ct r" style="left:1435px;top:456px;width:88px">0</div>
<div class="ct r" style="left:40px;top:485px;width:120px">8</div>
<div class="ct" style="left:168px;top:485px;width:164px">kiki</div>
<div class="ct" style="left:336px;top:485px;width:176px;letter-spacing:0.22px">Non kategori</div>
<div class="ct" style="left:516px;top:485px;width:825px;letter-spacing:-0.22px">aa@44.aa</div>
<div class="ct r" style="left:1342px;top:485px;width:88px">0</div>
<div class="ct r" style="left:1435px;top:485px;width:88px">0</div>
<div class="ct r" style="left:40px;top:514px;width:120px">15</div>
<div class="ct" style="left:168px;top:514px;width:164px">Benny</div>
<div class="ct" style="left:336px;top:514px;width:176px;letter-spacing:0.22px">Gold</div>
<div class="ct" style="left:516px;top:514px;width:215px;letter-spacing:0.25px">lega.subhanudin@gmail.com</div>
<div class="ct r" style="left:732px;top:514px;width:178px">8122396699</div>
<div class="ct r" style="left:1342px;top:514px;width:88px">0</div>
<div class="ct r" style="left:1435px;top:514px;width:88px">0</div>
<div class="ct r" style="left:40px;top:543px;width:120px">17</div>
<div class="ct" style="left:168px;top:543px;width:164px">Wie Hauw</div>
<div class="ct" style="left:336px;top:543px;width:176px;letter-spacing:0.22px">Non kategori</div>
<div class="ct" style="left:516px;top:543px;width:215px;letter-spacing:0.25px">mysterygourmet@gmail.com</div>
<div class="ct r" style="left:732px;top:543px;width:178px">8157003318</div>
<div class="ct r" style="left:1342px;top:543px;width:88px">0</div>
<div class="ct r" style="left:1435px;top:543px;width:88px">0</div>
<div class="ct r" style="left:40px;top:572px;width:120px">18</div>
<div class="ct" style="left:168px;top:572px;width:164px">L'ega</div>
<div class="ct" style="left:336px;top:572px;width:176px;letter-spacing:0.22px">Non kategori</div>
<div class="ct" style="left:516px;top:572px;width:215px;letter-spacing:0.25px">egund@autopilotstore.com</div>
<div class="ct r" style="left:732px;top:572px;width:178px">222</div>
<div class="ct r" style="left:1342px;top:572px;width:88px">0</div>
<div class="ct r" style="left:1435px;top:572px;width:88px">0</div>
<div class="ct r" style="left:40px;top:601px;width:120px">19</div>
<div class="ct" style="left:168px;top:601px;width:164px">Robby</div>
<div class="ct" style="left:336px;top:601px;width:176px;letter-spacing:0.22px">Non kategori</div>
<div class="ct" style="left:516px;top:601px;width:215px;letter-spacing:0.25px">saragirobbyfernando@gmail.com</div>
<div class="ct r" style="left:732px;top:601px;width:178px">8127090515</div>
<div class="ct r" style="left:1342px;top:601px;width:88px">0</div>
<div class="ct r" style="left:1435px;top:601px;width:88px">0</div>
<div class="ct r" style="left:40px;top:630px;width:120px">22</div>
<div class="ct" style="left:168px;top:630px;width:164px">Markus</div>
<div class="ct" style="left:336px;top:630px;width:176px;letter-spacing:0.22px">Non kategori</div>
<div class="ct" style="left:516px;top:630px;width:215px;letter-spacing:0.25px">findingmark@yahoo.com</div>
<div class="ct r" style="left:732px;top:630px;width:178px">816610837</div>
<div class="ct" style="left:1011px;top:630px;width:144px">Istana Regensi</div>
<div class="ct r" style="left:1156px;top:630px;width:88px">23</div>
<div class="ct r" style="left:1249px;top:630px;width:88px">40174</div>
<div class="ct r" style="left:1342px;top:630px;width:88px">0</div>
<div class="ct r" style="left:1435px;top:630px;width:88px">0</div>
<div class="ct r" style="left:40px;top:659px;width:120px">29</div>
<div class="ct" style="left:168px;top:659px;width:164px;letter-spacing:-0.15px">Bapak Anjas</div>
<div class="ct" style="left:336px;top:659px;width:176px;letter-spacing:0.22px">Non kategori</div>
<div class="ct" style="left:516px;top:659px;width:215px;letter-spacing:0.25px">test@test.com</div>
<div class="ct r" style="left:732px;top:659px;width:178px">81320986214</div>
<div class="ct r" style="left:1342px;top:659px;width:88px">0</div>
<div class="ct r" style="left:1435px;top:659px;width:88px">0</div>
<div class="ct r" style="left:40px;top:688px;width:120px">35</div>
<div class="ct" style="left:168px;top:688px;width:164px">Ani</div>
<div class="ct" style="left:336px;top:688px;width:176px;letter-spacing:0.22px">Non kategori</div>
<div class="ct" style="left:516px;top:688px;width:215px;letter-spacing:0.25px">a@n.i</div>
<div class="ct r" style="left:732px;top:688px;width:178px">8080888</div>
<div class="ct r" style="left:1342px;top:688px;width:88px">0</div>
<div class="ct r" style="left:1435px;top:688px;width:88px">0</div>
<div class="ct r" style="left:40px;top:717px;width:120px">36</div>
<div class="ct" style="left:168px;top:717px;width:164px">Ana</div>
<div class="ct" style="left:336px;top:717px;width:176px;letter-spacing:0.22px">Non kategori</div>
<div class="ct" style="left:516px;top:717px;width:215px;letter-spacing:0.25px">a@n.a</div>
<div class="ct r" style="left:732px;top:717px;width:178px">808055555</div>
<div class="ct r" style="left:1342px;top:717px;width:88px">0</div>
<div class="ct r" style="left:1435px;top:717px;width:88px">0</div>
<div class="ct r" style="left:40px;top:746px;width:120px">38</div>
<div class="ct" style="left:168px;top:746px;width:164px">Lega</div>
<div class="ct" style="left:336px;top:746px;width:176px;letter-spacing:0.22px">Platinum</div>
<div class="ct" style="left:516px;top:746px;width:825px;letter-spacing:0.25px">awqdswedfwe@a.com</div>
<div class="ct r" style="left:1342px;top:746px;width:88px">0</div>
<div class="ct r" style="left:1435px;top:746px;width:88px">0</div>
<div class="ct r" style="left:40px;top:775px;width:120px">39</div>
<div class="ct" style="left:168px;top:775px;width:164px">Melly</div>
<div class="ct" style="left:336px;top:775px;width:176px;letter-spacing:0.22px">Gold</div>
<div class="ct" style="left:516px;top:775px;width:825px;letter-spacing:0.25px">egund@autopilotstore.co.id</div>
<div class="ct r" style="left:1342px;top:775px;width:88px">0</div>
<div class="ct r" style="left:1435px;top:775px;width:88px">0</div>
<div class="selbox"></div>
<div class="abs" style="left:1580px;top:139px;width:20px;height:658px;background:#6a6a6a"></div>
<div class="abs" style="left:1596px;top:139px;width:1px;height:674px;background:#3d3d3d"></div>
<div class="abs" style="left:1597px;top:139px;width:3px;height:674px;background:#7b7b7b"></div>
<div class="abs" style="left:1582px;top:140px;width:13px;height:7px;box-sizing:border-box;border:1px solid #505050;background:linear-gradient(#9a9a9a,#7a7a7a)"></div>
<div class="abs" style="left:1584px;top:142px;width:9px;height:2px;background:#c4c4c4"></div>
<svg class="abs" style="left:1582px;top:152px" width="11" height="7" viewBox="0 0 11 7"><polygon points="0.5,6.5 10.5,6.5 5.5,1" fill="#2f2f2f"/></svg>
<div class="abs" style="left:1581px;top:164px;width:14px;height:25px;box-sizing:border-box;border:1px solid #383838;border-radius:2px;background:linear-gradient(90deg,#5e5e5e,#7c7c7c 50%,#5a5a5a)"></div>
<svg class="abs" style="left:1584px;top:173px" width="8" height="9" viewBox="0 0 8 9"><path d="M0,0.5 H8 M0,2.5 H8 M0,4.5 H8 M0,6.5 H8" stroke="#b8b8b8" stroke-width="1"/></svg>
<svg class="abs" style="left:1582px;top:785px" width="11" height="7" viewBox="0 0 11 7"><polygon points="0.5,0.5 10.5,0.5 5.5,6" fill="#2f2f2f"/></svg>
<div class="abs" style="left:1580px;top:796px;width:16px;height:1px;background:#5a5a5a"></div>
<div class="abs" style="left:0;top:797px;width:1596px;height:16px;background:#6e6e6e"></div>
<div class="abs" style="left:0;top:797px;width:1580px;height:1px;background:#2e2e2e"></div>
<div class="abs" style="left:0;top:812px;width:1600px;height:1px;background:#2e2e2e"></div>
<div class="abs" style="left:0;top:798px;width:62px;height:14px;box-sizing:border-box;border-right:1px solid #3a3a3a;background:#6e6e6e;box-shadow:inset 0 -1px 0 #8e8e8e,inset 1px 0 0 #8a8a8a"></div>
<svg class="abs" style="left:0px;top:798px" width="62" height="14" viewBox="0 0 62 14">
      <path d="M6.5,3 V11" stroke="#a8a8a8" stroke-width="1.2"/><polygon points="12,3 12,11 7.5,7" fill="#a8a8a8"/>
      <polygon points="26,3 26,11 21.5,7" fill="#a8a8a8"/>
      <polygon points="36,3 36,11 40.5,7" fill="#a8a8a8"/>
      <polygon points="50,3 50,11 54.5,7" fill="#a8a8a8"/><path d="M56,3 V11" stroke="#a8a8a8" stroke-width="1.2"/>
    </svg>
<svg class="abs" style="left:60px;top:797px" width="140" height="16" viewBox="0 0 140 16"><path d="M2,0 H139 L125,14.5 H5 L2,12 Z" fill="#ffffff"/><path d="M139,0.5 L125,14.5 H5 L2,12" fill="none" stroke="#333" stroke-width="1"/></svg>
<div class="t" style="left:72px;top:799.20px;font-size:13px;line-height:13px;color:#3e4650;font-weight:bold;height:15px;overflow:hidden">daftar_pelanggan</div>
<svg class="abs" style="left:183px;top:797px" width="52" height="16" viewBox="0 0 52 16"><path d="M16,0.5 H48.5 L35,14.5 H2 Z" fill="#6a6a6a" stroke="#2e2e2e" stroke-width="1"/><path d="M17,2 H45.5 L34,13 H5" fill="none" stroke="#8c8c8c" stroke-width="1"/></svg>
<svg class="abs" style="left:198px;top:798px" width="18" height="14" viewBox="0 0 18 14"><path d="M5,4 H15.5 V11 H10 Q9,12.5 7.5,12.5 H5 Z" fill="#dde6f4" stroke="#7f9bc4" stroke-width="0.8"/><circle cx="5" cy="4.5" r="3" fill="#ffd84a" stroke="#d08a20" stroke-width="0.9" stroke-dasharray="1,0.8"/></svg>
<div class="abs" style="left:949px;top:798px;width:7px;height:13px;box-sizing:border-box;border:1px solid #4a4a4a;background:#8a8a8a"></div>
<div class="abs" style="left:951px;top:800px;width:2px;height:9px;background:#444"></div>
<svg class="abs" style="left:962px;top:800px" width="7" height="11" viewBox="0 0 7 11"><polygon points="6,0.5 6,10.5 0.5,5.5" fill="#2f2f2f"/></svg>
<div class="abs" style="left:973px;top:798px;width:436px;height:14px;box-sizing:border-box;border:1px solid #383838;border-radius:2px;background:linear-gradient(#7c7c7c,#5e5e5e)"></div>
<svg class="abs" style="left:1186px;top:801px" width="9" height="8" viewBox="0 0 9 8"><path d="M0.5,0 V8 M2.5,0 V8 M4.5,0 V8 M6.5,0 V8" stroke="#b8b8b8" stroke-width="1"/></svg>
<svg class="abs" style="left:1561px;top:800px" width="7" height="11" viewBox="0 0 7 11"><polygon points="0.5,0.5 0.5,10.5 6,5.5" fill="#2f2f2f"/></svg>
<div class="abs" style="left:1572px;top:798px;width:8px;height:14px;box-sizing:border-box;border:1px solid #4a4a4a;background:#8a8a8a"></div>
<div class="abs" style="left:1575px;top:800px;width:2px;height:9px;background:#444"></div>
<div class="abs" style="left:1580px;top:797px;width:16px;height:16px;background:#6a6a6a"></div>
<div class="abs" style="left:0;top:813px;width:1600px;height:21px;background:linear-gradient(#4a4a4a,#3a3a3a 40%,#353535)"></div>
<div class="t" style="left:8.5px;top:819.36px;font-size:10.8px;line-height:10.8px;color:#e4e4e4;font-weight:normal;">Ready</div>
<div class="abs" style="left:48px;top:815px;width:1px;height:19px;background:#1e1e1e;box-shadow:1px 0 0 #555"></div>
<div class="abs" style="left:1358px;top:815px;width:1px;height:19px;background:#1e1e1e;box-shadow:1px 0 0 #555"></div>
<div class="abs" style="left:1363px;top:815px;width:19px;height:19px;box-sizing:border-box;border:1px solid #e8b848;border-radius:2px;background:linear-gradient(#ffe79a,#f9cd5a)"></div>
<svg class="abs" style="left:1366px;top:818px" width="13" height="12" viewBox="0 0 13 12"><rect x="0.5" y="0.5" width="12" height="11" fill="#3a3a3a"/><path d="M1,2.5 H12 M1,5.5 H12 M1,8.5 H12" stroke="#fff" stroke-width="2"/><path d="M4.5,1 V11 M8.5,1 V11" stroke="#3a3a3a" stroke-width="1"/></svg>
<svg class="abs" style="left:1383px;top:818px" width="15" height="13" viewBox="0 0 15 13"><rect x="0.5" y="0.5" width="14" height="12" fill="#9a9a9a" stroke="#6a6a6a"/><rect x="3.5" y="2.5" width="8" height="8" fill="#dcdcdc" stroke="#6a6a6a"/><path d="M5,5 H10 M5,7 H10" stroke="#777" stroke-width="1"/></svg>
<svg class="abs" style="left:1402px;top:818px" width="15" height="13" viewBox="0 0 15 13"><rect x="0.5" y="0.5" width="14" height="12" fill="#a0a0a0" stroke="#6a6a6a"/><rect x="2" y="1.5" width="3" height="7" fill="#f0f0f0"/><rect x="6.5" y="1.5" width="3" height="7" fill="#f0f0f0"/></svg>
<div class="t" style="left:1430px;top:819.39px;font-size:11px;line-height:11px;color:#dcdcdc;font-weight:normal;">145%</div>
<svg class="abs" style="left:1464px;top:815px" width="134" height="19" viewBox="0 0 134 19">
      <defs><radialGradient id="zg" cx="50%" cy="35%" r="65%"><stop offset="0" stop-color="#bdbdbd"/><stop offset="1" stop-color="#6a6a6a"/></radialGradient></defs>
      <circle cx="8" cy="9" r="7" fill="url(#zg)" stroke="#2a2a2a" stroke-width="0.8"/><path d="M4.5,9 H11.5" stroke="#222" stroke-width="2.2"/>
      <path d="M15,9.5 H117" stroke="#1e1e1e" stroke-width="1"/><path d="M15,10.5 H117" stroke="#606060" stroke-width="1"/>
      <path d="M66.5,6 V13" stroke="#8a8a8a" stroke-width="1"/>
      <circle cx="124" cy="9" r="7" fill="url(#zg)" stroke="#2a2a2a" stroke-width="0.8"/><path d="M120.5,9 H127.5 M124,5.5 V12.5" stroke="#222" stroke-width="2.2"/>
      <path d="M69.5,1.5 H77.5 V10 L73.5,13.5 L69.5,10 Z" fill="#b0b0b0" stroke="#404040" stroke-width="0.8"/>
    </svg>
</div>
</body></html>
